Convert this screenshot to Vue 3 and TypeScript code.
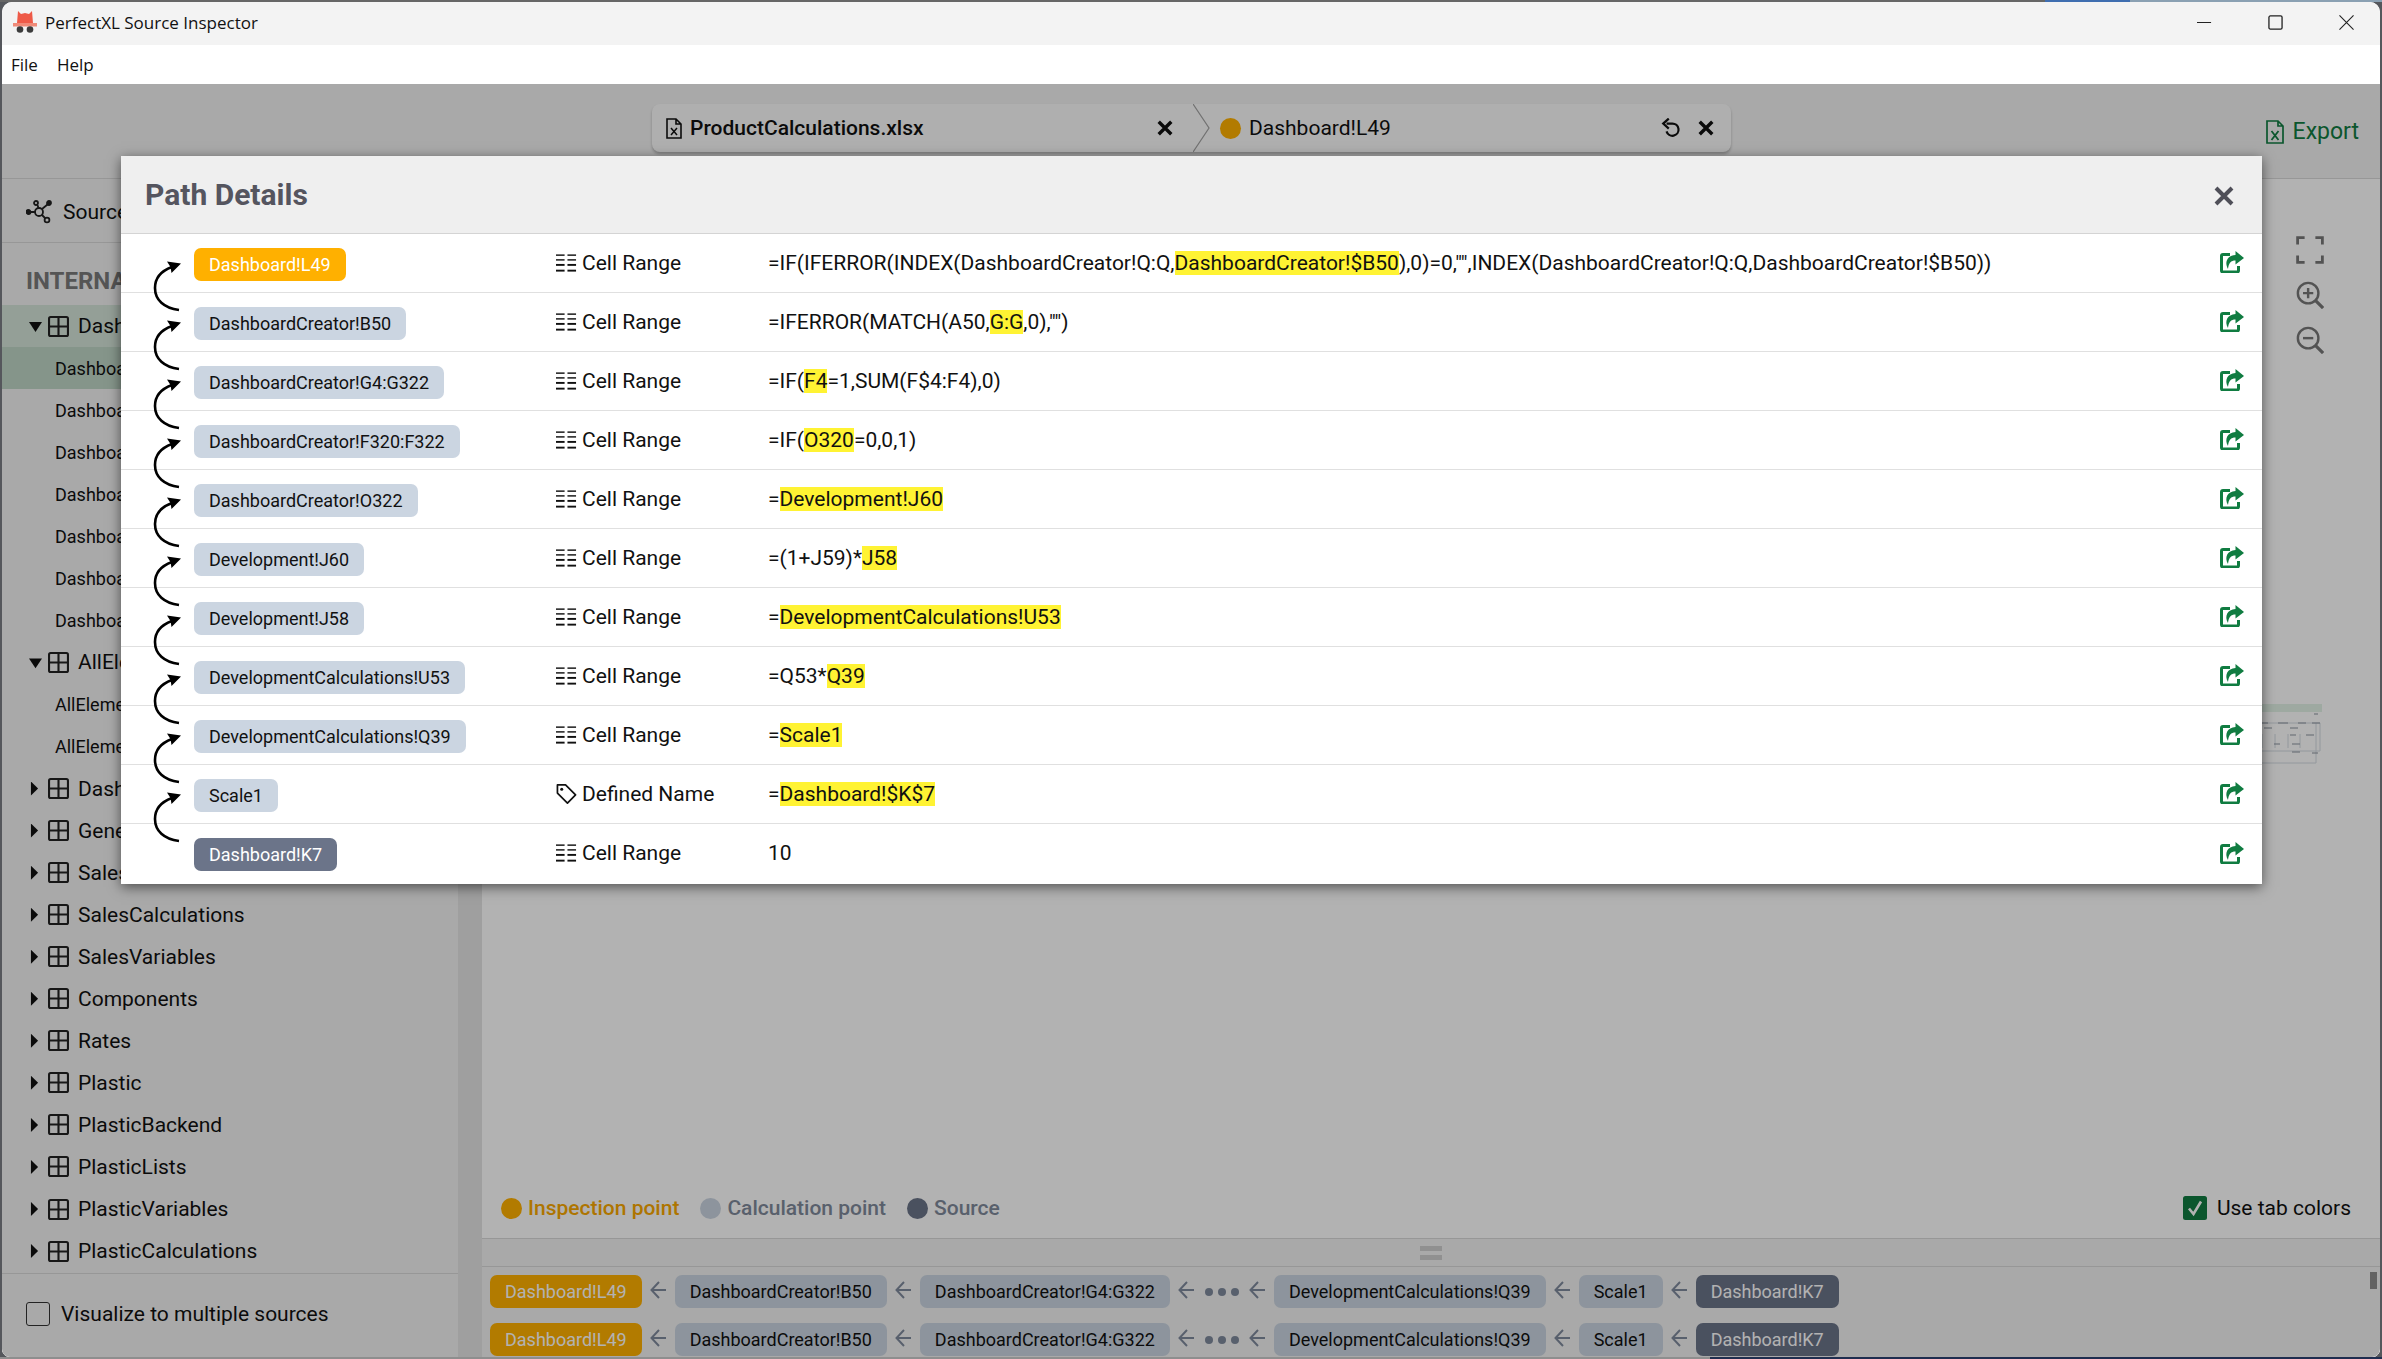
<script setup lang="ts">
type Part = { t: string; hl?: boolean }
type PathRow = { name: string; kind: 'start' | 'calc' | 'end'; type: string; tag?: boolean; parts: Part[] }

const pathRows: PathRow[] = [
  { name: 'Dashboard!L49', kind: 'start', type: 'Cell Range', parts: [
    { t: '=IF(IFERROR(INDEX(DashboardCreator!Q:Q,' }, { t: 'DashboardCreator!$B50', hl: true },
    { t: '),0)=0,"",INDEX(DashboardCreator!Q:Q,DashboardCreator!$B50))' }] },
  { name: 'DashboardCreator!B50', kind: 'calc', type: 'Cell Range', parts: [
    { t: '=IFERROR(MATCH(A50,' }, { t: 'G:G', hl: true }, { t: ',0),"")' }] },
  { name: 'DashboardCreator!G4:G322', kind: 'calc', type: 'Cell Range', parts: [
    { t: '=IF(' }, { t: 'F4', hl: true }, { t: '=1,SUM(F$4:F4),0)' }] },
  { name: 'DashboardCreator!F320:F322', kind: 'calc', type: 'Cell Range', parts: [
    { t: '=IF(' }, { t: 'O320', hl: true }, { t: '=0,0,1)' }] },
  { name: 'DashboardCreator!O322', kind: 'calc', type: 'Cell Range', parts: [
    { t: '=' }, { t: 'Development!J60', hl: true }] },
  { name: 'Development!J60', kind: 'calc', type: 'Cell Range', parts: [
    { t: '=(1+J59)*' }, { t: 'J58', hl: true }] },
  { name: 'Development!J58', kind: 'calc', type: 'Cell Range', parts: [
    { t: '=' }, { t: 'DevelopmentCalculations!U53', hl: true }] },
  { name: 'DevelopmentCalculations!U53', kind: 'calc', type: 'Cell Range', parts: [
    { t: '=Q53*' }, { t: 'Q39', hl: true }] },
  { name: 'DevelopmentCalculations!Q39', kind: 'calc', type: 'Cell Range', parts: [
    { t: '=' }, { t: 'Scale1', hl: true }] },
  { name: 'Scale1', kind: 'calc', type: 'Defined Name', tag: true, parts: [
    { t: '=' }, { t: 'Dashboard!$K$7', hl: true }] },
  { name: 'Dashboard!K7', kind: 'end', type: 'Cell Range', parts: [{ t: '10' }] },
]

const dashChildren = ['Dashboard!L49', 'Dashboard!L50', 'Dashboard!L51', 'Dashboard!L52', 'Dashboard!L53', 'Dashboard!L54', 'Dashboard!L55']
const closedSheets = ['DashboardCreator', 'General', 'Sales', 'SalesCalculations', 'SalesVariables', 'Components', 'Rates', 'Plastic', 'PlasticBackend', 'PlasticLists', 'PlasticVariables', 'PlasticCalculations']
const trailHead = ['DashboardCreator!B50', 'DashboardCreator!G4:G322']
const trailTail = ['DevelopmentCalculations!Q39', 'Scale1']
</script>

<template>
  <div class="screen">
    <div class="window">
      <div class="titlebar">
        <svg class="app-icon" viewBox="0 0 24 22">
          <path d="M5 0 L8 3 L12 2 L16 3 L19 0 L20 12 L4 12 Z" fill="#ee5a48" />
          <rect x="0" y="12" width="24" height="3.5" fill="#f08a78" />
          <circle cx="7" cy="18.5" r="3.3" fill="#3c3c3c" />
          <circle cx="17" cy="18.5" r="3.3" fill="#3c3c3c" />
        </svg>
        <span class="app-title">PerfectXL Source Inspector</span>
        <div class="win-controls">
          <svg viewBox="0 0 16 16" class="win-btn"><path d="M0 8H15" stroke="#222" stroke-width="1.2" /></svg>
          <svg viewBox="0 0 16 16" class="win-btn"><rect x="1" y="1" width="14" height="14" rx="1.5" fill="none" stroke="#222" stroke-width="1.4" /></svg>
          <svg viewBox="0 0 16 16" class="win-btn"><path d="M0.5 0.5L15.5 15.5M15.5 0.5L0.5 15.5" stroke="#222" stroke-width="1.2" /></svg>
        </div>
      </div>
      <div class="menubar"><span>File</span><span>Help</span></div>

      <div class="content">
        <div class="topbar">
          <div class="crumbs">
            <div class="crumb file">
              <svg class="file-icon" viewBox="0 0 16 21"><path d="M1 1H10L15 6V20H1Z M10 1V6H15" fill="none" stroke="#111" stroke-width="1.6" /><path d="M5 10L11 17M11 10L5 17" stroke="#111" stroke-width="1.5" /></svg>
              <span class="file-name">ProductCalculations.xlsx</span>
              <svg class="x-icon" viewBox="0 0 14 14"><path d="M1.5 1.5L12.5 12.5M12.5 1.5L1.5 12.5" stroke="#111" stroke-width="3" /></svg>
            </div>
            <svg class="chevron" viewBox="0 0 17 48"><path d="M0 0L16 24L0 48" fill="none" stroke="#a2a2a2" stroke-width="1.2" /></svg>
            <div class="crumb cell">
              <i class="dot orange"></i>
              <span>Dashboard!L49</span>
              <svg class="undo-icon" viewBox="0 0 18 18"><path d="M5 5H10A5.5 5.5 0 1 1 5 12" fill="none" stroke="#111" stroke-width="2" /><path d="M7 0.5L2 5L7 9.5" fill="none" stroke="#111" stroke-width="2" /></svg>
              <svg class="x-icon" viewBox="0 0 14 14"><path d="M1.5 1.5L12.5 12.5M12.5 1.5L1.5 12.5" stroke="#111" stroke-width="3" /></svg>
            </div>
          </div>
          <div class="export">
            <svg viewBox="0 0 18 24"><path d="M1 1H12L17 6V23H1Z M12 1V6H17" fill="none" stroke="#107c41" stroke-width="1.7" /><path d="M5.5 11L12.5 20M12.5 11L5.5 20" stroke="#107c41" stroke-width="1.8" /></svg>
            <span>Export</span>
          </div>
        </div>

        <div class="workspace">
          <aside class="sidebar">
            <div class="side-tab">
              <svg viewBox="0 0 26 24" class="net-icon" fill="none" stroke="#222" stroke-width="1.8">
                <circle cx="13" cy="12" r="4" /><circle cx="21" cy="20" r="2.4" /><circle cx="10" cy="3" r="2" />
                <circle cx="23" cy="3" r="2" fill="#222" /><circle cx="2.5" cy="12" r="2" fill="#222" />
                <path d="M16 15L19.5 18.5M11.5 5L12.5 8M16 9L21.5 4.5M9 12H4.5" />
              </svg>
              <span>Sources</span>
            </div>
            <div class="side-heading">INTERNAL SHEETS</div>
            <div class="tree">
              <div class="sheet open-sheet">
                <i class="caret down"></i>
                <svg class="grid-icon" viewBox="0 0 20 20"><rect x="1" y="1" width="18" height="18" rx="1.5" fill="none" stroke="#222" stroke-width="2" /><path d="M10 1V19M1 10H19" stroke="#222" stroke-width="2" /></svg>
                <span>Dashboard</span>
              </div>
              <div v-for="(c, i) in dashChildren" :key="c" class="cell-item" :class="{ current: i === 0 }">{{ c }}</div>
              <div class="sheet">
                <i class="caret down"></i>
                <svg class="grid-icon" viewBox="0 0 20 20"><rect x="1" y="1" width="18" height="18" rx="1.5" fill="none" stroke="#222" stroke-width="2" /><path d="M10 1V19M1 10H19" stroke="#222" stroke-width="2" /></svg>
                <span>AllElements</span>
              </div>
              <div class="cell-item">AllElements!C4</div>
              <div class="cell-item">AllElements!C5</div>
              <div v-for="s in closedSheets" :key="s" class="sheet">
                <i class="caret right"></i>
                <svg class="grid-icon" viewBox="0 0 20 20"><rect x="1" y="1" width="18" height="18" rx="1.5" fill="none" stroke="#222" stroke-width="2" /><path d="M10 1V19M1 10H19" stroke="#222" stroke-width="2" /></svg>
                <span>{{ s }}</span>
              </div>
            </div>
            <label class="multi-check"><i class="box"></i><span>Visualize to multiple sources</span></label>
          </aside>
          <div class="splitter"></div>

          <main class="main">
            <div class="canvas">
              <div class="zoom-tools">
                <svg viewBox="0 0 26 26" fill="none" stroke="#777" stroke-width="2.6"><path d="M1.5 8V1.5H8M18 1.5H24.5V8M24.5 18V24.5H18M8 24.5H1.5V18" /></svg>
                <svg viewBox="0 0 30 30" fill="none" stroke="#777" stroke-width="2.6"><circle cx="13" cy="13" r="11" /><path d="M21 21L29 29" stroke-width="3.4" /><path d="M7.5 13H18.5M13 7.5V18.5" /></svg>
                <svg viewBox="0 0 30 30" fill="none" stroke="#777" stroke-width="2.6"><circle cx="13" cy="13" r="11" /><path d="M21 21L29 29" stroke-width="3.4" /><path d="M7.5 13H18.5" /></svg>
              </div>
              <svg class="minimap" viewBox="0 0 122 60" fill="none" stroke="#d4dae2" stroke-width="1">
                <rect x="0" y="0" width="122" height="8" fill="#e2f2e7" stroke="none" />
                <path d="M0 19H120V47H0M0 59H116V19" />
                <path d="M62 30V44M75 30V44M88 30V44M100 30V44" />
                <g stroke="#8b93a0" stroke-width="1.2">
                  <path d="M2 19H10M14 19H24M60 19H68M78 19H88M98 19H106M112 19H120M114 10H118" />
                  <path d="M32 24H40M64 24H72M90 24H98" />
                  <path d="M28 31H36M50 31H58M90 31H96M106 31H114" />
                  <path d="M74 40H80M92 40H100M92 48H100" />
                  <path d="M118 49H112M20 44H30M20 50H28M20 57H28" />
                </g>
              </svg>
            </div>
            <div class="legend-bar">
              <span class="legend-item start"><i class="dot orange"></i>Inspection point</span>
              <span class="legend-item"><i class="dot pale"></i>Calculation point</span>
              <span class="legend-item"><i class="dot dark"></i>Source</span>
              <label class="tab-check">
                <svg viewBox="0 0 24 24"><rect width="24" height="24" rx="2.5" fill="#107c41" /><path d="M6 12.5L10.5 18L18 5.5" fill="none" stroke="#fff" stroke-width="2.6" /></svg>
                <span>Use tab colors</span>
              </label>
            </div>
            <div class="handle"><i></i><i></i></div>
            <div class="trails">
              <div v-for="n in 2" :key="n" class="trail">
                <span class="pill start">Dashboard!L49</span>
                <template v-for="p in trailHead" :key="p">
                  <svg class="back" viewBox="0 0 17 20"><path d="M16 10H2M9 2L1.5 10L9 18" fill="none" stroke="#7f8a9c" stroke-width="2" /></svg>
                  <span class="pill">{{ p }}</span>
                </template>
                <svg class="back" viewBox="0 0 17 20"><path d="M16 10H2M9 2L1.5 10L9 18" fill="none" stroke="#7f8a9c" stroke-width="2" /></svg>
                <span class="more"><i></i><i></i><i></i></span>
                <template v-for="p in trailTail" :key="p">
                  <svg class="back" viewBox="0 0 17 20"><path d="M16 10H2M9 2L1.5 10L9 18" fill="none" stroke="#7f8a9c" stroke-width="2" /></svg>
                  <span class="pill">{{ p }}</span>
                </template>
                <svg class="back" viewBox="0 0 17 20"><path d="M16 10H2M9 2L1.5 10L9 18" fill="none" stroke="#7f8a9c" stroke-width="2" /></svg>
                <span class="pill end">Dashboard!K7</span>
              </div>
              <div class="scroll-thumb"></div>
            </div>
          </main>
        </div>

        <div class="dim"></div>

        <section class="modal">
          <header class="modal-head">
            <h2>Path Details</h2>
            <svg viewBox="0 0 20 20"><path d="M2 2L18 18M18 2L2 18" stroke="#4f4f58" stroke-width="4" /></svg>
          </header>
          <div v-for="(row, i) in pathRows" :key="row.name" class="path-row">
            <svg v-if="i < pathRows.length - 1" class="hop" viewBox="0 0 32 56">
              <path d="M29 52C14 50 5 42 5 30C5 20 11 13 22 9" fill="none" stroke="#000" stroke-width="2.6" />
              <path d="M31 5.5L17 3.5L20.5 9L21.5 15Z" fill="#000" />
            </svg>
            <div class="name-col"><span class="pill" :class="row.kind">{{ row.name }}</span></div>
            <div class="type-col">
              <svg v-if="row.tag" viewBox="0 0 22 22" class="type-icon tag"><path d="M1.5 1.5H10L20.5 12L12 20.5L1.5 10Z" fill="none" stroke="#111" stroke-width="1.8" stroke-linejoin="round" /><circle cx="6" cy="6" r="1.6" fill="#111" /></svg>
              <svg v-else viewBox="0 0 22 18" class="type-icon"><g fill="#111"><rect x="0" y="0" width="9" height="1.5" /><rect x="12" y="0" width="9" height="1.5" /><rect x="0" y="5" width="9" height="1.5" /><rect x="12" y="5" width="9" height="1.5" /><rect x="0" y="10" width="9" height="2" /><rect x="12" y="10" width="9" height="2" /><rect x="0" y="16" width="9" height="2" /><rect x="12" y="16" width="9" height="2" /></g></svg>
              <span>{{ row.type }}</span>
            </div>
            <div class="formula"><span v-for="(p, j) in row.parts" :key="j" :class="{ hl: p.hl }">{{ p.t }}</span></div>
            <svg class="jump" viewBox="0 0 24 22">
              <path d="M10 3.5H3A1.5 1.5 0 0 0 1.5 5V19.5A1.5 1.5 0 0 0 3 21H17A1.5 1.5 0 0 0 18.5 19.5V15" fill="none" stroke="#107c41" stroke-width="3" />
              <path d="M15.5 0L24 7L15.5 13.5V9.5C11 9.5 8.5 12 8 18C4 11 7.5 4.5 15.5 4Z" fill="#107c41" />
            </svg>
          </div>
        </section>
      </div>
    </div>
  </div>
</template>

<style>
body {
  margin: 0;
  overflow: hidden;
}
</style>

<style scoped>
.screen {
  width: 2382px;
  height: 1359px;
  box-sizing: border-box;
  padding: 2px 2px 2px 2px;
  background:
    linear-gradient(90deg, #666 0, #666 2045px, #3f6eb0 2045px, #3f6eb0 2130px, #8aa0b2 2130px) top / 100% 2px no-repeat,
    linear-gradient(90deg, #8e8e8e 0, #8e8e8e 1710px, #1f2d4f 1710px) bottom / 100% 2px no-repeat,
    #55575c;
  font-family: Roboto, "Liberation Sans", sans-serif;
  color: #111;
}
.window {
  height: 100%;
  display: flex;
  flex-direction: column;
  border-radius: 10px 10px 8px 8px;
  overflow: hidden;
  background: #fff;
}
.titlebar {
  height: 43px;
  flex: none;
  box-sizing: border-box;
  padding: 0 0 3px 11px;
  background: #f3f3f3;
  display: flex;
  align-items: center;
  font-family: "Open Sans", sans-serif;
  font-size: 17px;
}
.app-icon {
  width: 24px;
  height: 22px;
  margin-right: 8px;
}
.win-controls {
  margin-left: auto;
  display: flex;
  align-items: center;
  gap: 56px;
  padding-right: 26px;
}
.win-btn {
  width: 15px;
  height: 15px;
}
.menubar {
  height: 39px;
  flex: none;
  display: flex;
  align-items: center;
  gap: 19px;
  padding-left: 9px;
  font-family: "Open Sans", sans-serif;
  font-size: 17px;
}
.content {
  position: relative;
  flex: 1;
  min-height: 0;
  display: flex;
  flex-direction: column;
  background: #f3f3f3;
}
.topbar {
  height: 95px;
  flex: none;
  box-sizing: border-box;
  border-bottom: 1px solid #d8d8d8;
  padding: 20px 21px 0 650px;
  display: flex;
  align-items: flex-start;
  justify-content: space-between;
  background: #f3f3f3;
}
.crumbs {
  display: flex;
  width: 1079px;
  height: 48px;
  background: #fbfbfb;
  border-radius: 8px;
  box-shadow: 0 2px 3px rgba(0, 0, 0, 0.25);
  font-size: 21px;
}
.crumb {
  display: flex;
  align-items: center;
}
.crumb.file {
  width: 541px;
  box-sizing: border-box;
  padding: 0 20px 0 14px;
}
.crumb.cell {
  flex: 1;
  padding: 0 17px 0 10px;
}
.crumb.cell span {
  margin-left: 8px;
}
.file-icon {
  width: 16px;
  height: 21px;
  margin-right: 8px;
}
.file-name {
  font-weight: 500;
  flex: 1;
}
.x-icon {
  width: 16px;
  height: 16px;
}
.undo-icon {
  width: 20px;
  height: 20px;
  margin-left: auto;
  margin-right: 17px;
}
.chevron {
  width: 17px;
  height: 48px;
  flex: none;
}
.export {
  display: flex;
  align-items: center;
  gap: 9px;
  padding-top: 14px;
  font-size: 23px;
  color: #107c41;
}
.export svg {
  width: 18px;
  height: 24px;
}
.workspace {
  flex: 1;
  min-height: 0;
  display: flex;
}
.sidebar {
  width: 456px;
  flex: none;
  display: flex;
  flex-direction: column;
  background: #f3f3f3;
  font-size: 21px;
}
.side-tab {
  height: 64px;
  flex: none;
  box-sizing: border-box;
  border-bottom: 1px solid #d8d8d8;
  display: flex;
  align-items: center;
  gap: 11px;
  padding: 2px 0 0 24px;
}
.net-icon {
  width: 26px;
  height: 24px;
}
.side-heading {
  height: 62px;
  flex: none;
  box-sizing: border-box;
  padding: 24px 0 0 24px;
  font-size: 24px;
  font-weight: 700;
  color: #7a7a7a;
}
.tree {
  flex: 1;
  min-height: 0;
  overflow: hidden;
  border-bottom: 1px solid #d8d8d8;
}
.sheet {
  height: 42.05px;
  display: flex;
  align-items: center;
  padding-left: 27px;
  box-sizing: border-box;
}
.open-sheet {
  background: #d5e4d9;
}
.caret {
  width: 13px;
  height: 14px;
  margin-right: 7px;
  flex: none;
  display: block;
}
.caret.down {
  margin-top: 2px;
  clip-path: polygon(0 15%, 100% 15%, 50% 85%);
  background: #111;
}
.caret.right {
  clip-path: polygon(15% 0, 70% 50%, 15% 100%);
  background: #111;
}
.grid-icon {
  width: 21px;
  height: 21px;
  margin-left: -1px;
  margin-right: 9px;
  flex: none;
}
.cell-item {
  height: 42.05px;
  box-sizing: border-box;
  padding-left: 53px;
  font-size: 18px;
  display: flex;
  align-items: center;
}
.cell-item.current {
  background: #bfd6c6;
}
.multi-check {
  height: 83px;
  flex: none;
  box-sizing: border-box;
  padding: 0 0 3px 24px;
  display: flex;
  align-items: center;
  gap: 11px;
}
.box {
  width: 22px;
  height: 22px;
  border: 1.5px solid #333;
  border-radius: 3px;
  display: block;
}
.splitter {
  width: 24px;
  flex: none;
  background: #e4e4e4;
}
.main {
  flex: 1;
  min-width: 0;
  display: flex;
  flex-direction: column;
  background: #fff;
}
.canvas {
  position: relative;
  flex: 1;
  min-height: 0;
}
.zoom-tools {
  position: absolute;
  top: 57px;
  right: 56px;
  display: flex;
  flex-direction: column;
  align-items: center;
  gap: 17px;
}
.zoom-tools svg {
  width: 28px;
  height: 28px;
}
.minimap {
  position: absolute;
  left: 1718px;
  top: 525px;
  width: 122px;
  height: 60px;
}
.legend-bar {
  height: 59px;
  flex: none;
  box-sizing: border-box;
  border-bottom: 1px solid #d8d8d8;
  display: flex;
  align-items: center;
  padding: 0 29px 2px 19px;
  gap: 21px;
  font-size: 21px;
  font-weight: 500;
  color: #808a9b;
}
.legend-item {
  display: flex;
  align-items: center;
  gap: 6px;
}
.legend-item.start {
  color: #f9a800;
}
.dot {
  width: 21px;
  height: 21px;
  border-radius: 50%;
  display: block;
  flex: none;
}
.dot.orange {
  background: #ffb000;
}
.dot.pale {
  background: #cbd5e1;
}
.dot.dark {
  background: #6b7489;
}
.tab-check {
  margin-left: auto;
  display: flex;
  align-items: center;
  gap: 10px;
  font-weight: 400;
  color: #111;
}
.tab-check svg {
  width: 24px;
  height: 24px;
}
.handle {
  height: 28px;
  flex: none;
  box-sizing: border-box;
  border-bottom: 1px solid #d8d8d8;
  background: #f3f3f3;
  display: flex;
  flex-direction: column;
  align-items: center;
  gap: 4px;
  padding: 7px 0 0 0;
}
.handle i {
  width: 22px;
  height: 5px;
  background: #cfcfcf;
  display: block;
}
.trails {
  position: relative;
  height: 90px;
  flex: none;
  background: #f3f3f3;
  box-sizing: border-box;
  padding: 8px 0 0 8px;
  display: flex;
  flex-direction: column;
  gap: 15px;
  overflow: hidden;
}
.trail {
  display: flex;
  align-items: center;
  gap: 8px;
}
.back {
  width: 17px;
  height: 20px;
  flex: none;
  margin-top: -3px;
}
.more {
  width: 34px;
  margin: 0 2px;
  display: flex;
  justify-content: space-between;
}
.more i {
  width: 8px;
  height: 8px;
  border-radius: 50%;
  background: #7f8a9c;
  display: block;
}
.scroll-thumb {
  position: absolute;
  right: 3px;
  top: 5px;
  width: 7px;
  height: 17px;
  background: #8f8f8f;
}
.pill {
  display: inline-flex;
  align-items: center;
  flex: none;
  height: 33px;
  padding: 0 15px;
  border-radius: 7px;
  font-size: 18px;
  background: #cbd5e1;
  color: #111;
  white-space: nowrap;
}
.pill.start {
  background: #ffb000;
  color: #fff;
}
.pill.end {
  background: #6b7489;
  color: #fff;
}
.dim {
  position: absolute;
  inset: 0;
  background: rgba(0, 0, 0, 0.3);
}
.modal {
  position: absolute;
  left: 119px;
  top: 72px;
  width: 2141px;
  padding-bottom: 1px;
  background: #fff;
  box-shadow: 0 3px 12px rgba(0, 0, 0, 0.55);
}
.modal-head {
  height: 78px;
  box-sizing: border-box;
  background: #efefef;
  border-bottom: 1px solid #d4d4d4;
  display: flex;
  align-items: center;
  justify-content: space-between;
  padding: 0 28px 0 24px;
}
.modal-head h2 {
  margin: 0;
  font-size: 30px;
  font-weight: 700;
  color: #55555f;
}
.modal-head svg {
  width: 20px;
  height: 20px;
  margin-top: 2px;
}
.path-row {
  position: relative;
  height: 59px;
  box-sizing: border-box;
  display: grid;
  grid-template-columns: 435px 212px 1fr auto;
  align-items: center;
  padding-right: 18px;
  font-size: 21px;
  border-bottom: 1px solid #e0e0e0;
}
.path-row:last-child {
  border-bottom: none;
}
.hop {
  position: absolute;
  left: 29px;
  top: 24px;
  width: 32px;
  height: 56px;
  z-index: 1;
}
.name-col {
  padding-left: 73px;
  display: flex;
  padding-top: 2px;
}
.type-col {
  display: flex;
  align-items: center;
  gap: 5px;
  margin-top: -1px;
}
.type-icon {
  width: 21px;
  height: 18px;
}
.type-icon.tag {
  height: 22px;
}
.formula {
  white-space: nowrap;
  margin-top: -1px;
}
.hl {
  background: #fff333;
}
.jump {
  width: 24px;
  height: 22px;
  margin-top: -2px;
}
</style>
